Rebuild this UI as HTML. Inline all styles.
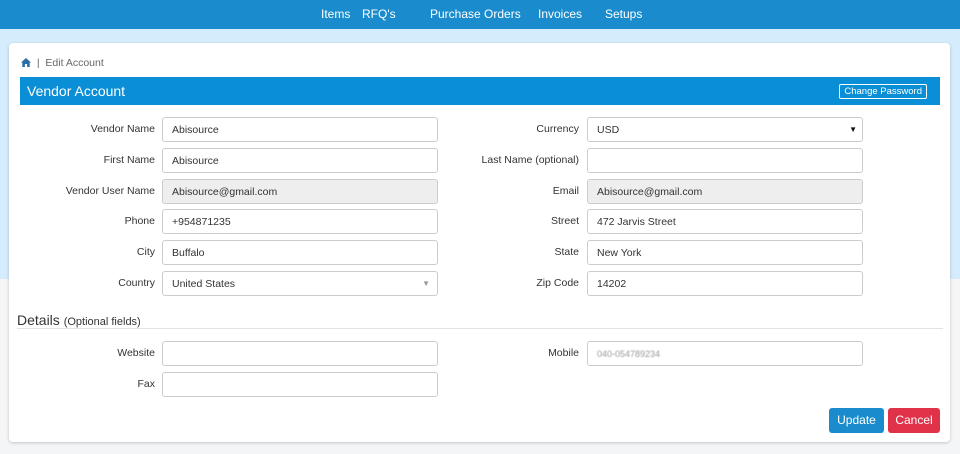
<!DOCTYPE html>
<html><head><style>
*{box-sizing:border-box;margin:0;padding:0}
body{width:960px;height:454px;overflow:hidden;font-family:"Liberation Sans",sans-serif;background:#f4f5f6;position:relative;font-size:11px;color:#333}
.nav{position:absolute;left:0;top:0;width:960px;height:29px;background:#1a8ccd}
.nav span{position:absolute;top:7px;color:#fff;font-size:12px}
.bg{position:absolute;left:0;top:29px;width:960px;height:250px;background:#d4ecfb}
.card{position:absolute;left:9px;top:43px;width:941px;height:399px;background:#fff;border-radius:4px;box-shadow:0 1px 3px rgba(0,0,0,.2)}
.crumb{position:absolute;left:21px;top:57px;color:#666;font-size:10.5px}
.hdr{position:absolute;left:20px;top:77px;width:920px;height:28px;background:#0a8fd6;color:#fff;font-size:14px;padding:6px 7px}
.cp{position:absolute;right:13px;top:7px;border:1px solid #fff;border-radius:2px;font-size:9.5px;padding:1px 4px}
.l{position:absolute;text-align:right;width:150px;font-size:10.5px;color:#333}
.i{position:absolute;width:276px;height:25px;border:1px solid #ccc;border-radius:3px;font-size:10.5px;padding:6px 9px;background:#fff}
.g{background:#eee}
.btn{position:absolute;top:408px;height:25px;color:#fff;font-size:12px;border-radius:3px;padding:5px 0;text-align:center}
</style></head><body>
<div class="nav"><span style="left:321px">Items</span><span style="left:362px">RFQ's</span><span style="left:430px">Purchase Orders</span><span style="left:538px">Invoices</span><span style="left:605px">Setups</span></div>
<div class="bg"></div>
<div class="card"></div>
<div class="crumb"><svg width="10" height="9" viewBox="0 0 10 9" style="vertical-align:-1px"><path d="M5 0L0 4.5h1.3V9h2.6V6h2.2v3h2.6V4.5H10z" fill="#2a6fa8"/></svg> &nbsp;| &nbsp;Edit Account</div>
<div class="hdr">Vendor Account<span class="cp">Change Password</span></div>

<div class="l" style="left:5px;top:123px">Vendor Name</div><div class="i" style="left:162px;top:117px">Abisource</div>
<div class="l" style="left:5px;top:154px">First Name</div><div class="i" style="left:162px;top:148px">Abisource</div>
<div class="l" style="left:5px;top:185px">Vendor User Name</div><div class="i g" style="left:162px;top:179px">Abisource@gmail.com</div>
<div class="l" style="left:5px;top:215px">Phone</div><div class="i" style="left:162px;top:209px">+954871235</div>
<div class="l" style="left:5px;top:246px">City</div><div class="i" style="left:162px;top:240px">Buffalo</div>
<div class="l" style="left:5px;top:277px">Country</div><div class="i" style="left:162px;top:271px">United States<span style="position:absolute;right:7px;color:#999;font-size:8px;top:7px">▼</span></div>

<div class="l" style="left:429px;top:123px">Currency</div><div class="i" style="left:587px;top:117px">USD<span style="position:absolute;right:5px;font-size:8px;top:7px;color:#111">▼</span></div>
<div class="l" style="left:429px;top:154px">Last Name (optional)</div><div class="i" style="left:587px;top:148px"></div>
<div class="l" style="left:429px;top:185px">Email</div><div class="i g" style="left:587px;top:179px">Abisource@gmail.com</div>
<div class="l" style="left:429px;top:215px">Street</div><div class="i" style="left:587px;top:209px">472 Jarvis Street</div>
<div class="l" style="left:429px;top:246px">State</div><div class="i" style="left:587px;top:240px">New York</div>
<div class="l" style="left:429px;top:277px">Zip Code</div><div class="i" style="left:587px;top:271px">14202</div>

<div style="position:absolute;left:17px;top:312px;font-size:14px;color:#333">Details <span style="font-size:11px">(Optional fields)</span></div>
<div style="position:absolute;left:17px;top:328px;width:926px;height:1px;background:#e3e3e3"></div>
<div class="l" style="left:5px;top:347px">Website</div><div class="i" style="left:162px;top:341px"></div>
<div class="l" style="left:5px;top:378px">Fax</div><div class="i" style="left:162px;top:372px"></div>
<div class="l" style="left:429px;top:347px">Mobile</div><div class="i" style="left:587px;top:341px"><span style="color:#999;font-size:9px;filter:blur(.5px);display:inline-block">040-054789234</span></div>
<div class="btn" style="left:829px;width:55px;background:#1a8ccd">Update</div>
<div class="btn" style="left:888px;width:52px;background:#e0334a">Cancel</div>
</body></html>
